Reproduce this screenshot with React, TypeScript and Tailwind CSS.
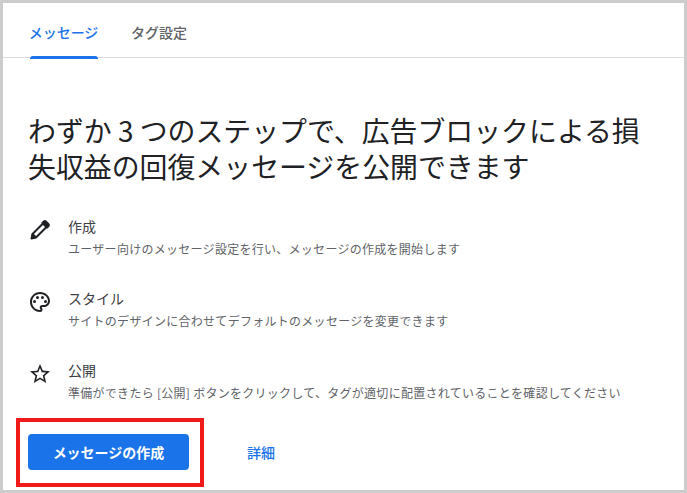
import React from "react";

const font = { fontFamily: '"Noto Sans CJK JP", "Noto Sans", sans-serif' };

function Pencil() {
  return (
    <svg viewBox="0 0 24 24" className="w-[24px] h-[24px]" fill="none" stroke="#202124" strokeWidth="2" strokeLinejoin="round">
      <path d="M4 20l1-4.5L15.5 5l3.5 3.5L8.5 19z" />
      <path d="M3.5 20.5l4.5-1-3.5-3.5z" fill="#202124" />
      <path d="M15.8 3.6a1.6 1.6 0 0 1 2.2 0l2.4 2.4a1.6 1.6 0 0 1 0 2.2L19 9.6 14.4 5z" fill="#202124" />
    </svg>
  );
}
function Palette() {
  return (
    <svg viewBox="0 0 24 24" className="w-[24px] h-[24px]" fill="#202124">
      <path d="M12 22C6.49 22 2 17.51 2 12S6.49 2 12 2s10 4.04 10 9c0 3.31-2.69 6-6 6h-1.77c-.28 0-.5.22-.5.5 0 .12.05.23.13.33.41.47.64 1.06.64 1.67A2.5 2.5 0 0 1 12 22zm0-18c-4.41 0-8 3.59-8 8s3.59 8 8 8c.28 0 .5-.22.5-.5a.54.54 0 0 0-.14-.35c-.41-.46-.63-1.05-.63-1.65a2.5 2.5 0 0 1 2.5-2.5H16c2.21 0 4-1.79 4-4 0-3.86-3.59-7-8-7z" />
      <circle cx="6.5" cy="11.5" r="1.5" />
      <circle cx="9.5" cy="7.5" r="1.5" />
      <circle cx="14.5" cy="7.5" r="1.5" />
      <circle cx="17.5" cy="11.5" r="1.5" />
    </svg>
  );
}
function Star() {
  return (
    <svg viewBox="0 0 24 24" className="w-[24px] h-[24px]" fill="#202124">
      <path d="M22 9.24l-7.19-.62L12 2 9.19 8.63 2 9.24l5.46 4.73L5.82 21 12 17.27 18.18 21l-1.63-7.03L22 9.24zM12 15.4l-3.76 2.27 1-4.28-3.32-2.88 4.38-.38L12 6.1l1.71 4.04 4.38.38-3.32 2.88 1 4.28L12 15.4z" />
    </svg>
  );
}

function Step({ icon, title, desc }: { icon: React.ReactNode; title: string; desc: string }) {
  return (
    <div className="flex h-[72px] items-start">
      <div className="w-[40px] shrink-0 pt-[2px]">{icon}</div>
      <div>
        <div className="text-[14px] leading-[20px] text-[#3c4043]">{title}</div>
        <div className="text-[12px] leading-[16px] mt-[5px] tracking-[0.28px] text-[#5f6368] whitespace-nowrap">{desc}</div>
      </div>
    </div>
  );
}

export default function App() {
  return (
    <div className="relative w-[687px] h-[493px] overflow-hidden bg-[#cccccc] p-[3px]" style={font}>
      <div className="w-full h-full bg-white flex flex-col">
        <div className="flex h-[55px] border-b border-[#dadce0] pl-[26px] gap-[33px] shrink-0">
          <div className="relative h-[55px] flex items-center justify-center w-[69px] pt-[4px] text-[14px] font-medium text-[#1a73e8] whitespace-nowrap">
            メッセージ
            <div className="absolute left-[1px] right-0 bottom-[-1px] h-[3px] rounded-t-[3px] bg-[#1a73e8]" />
          </div>
          <div className="h-[55px] flex items-center pt-[4px] text-[14px] font-medium text-[#5f6368] whitespace-nowrap">タグ設定</div>
        </div>
        <div className="pl-[25px] pr-[26px] pt-[54px] flex flex-col">
          <h1 className="text-[27.9px] leading-[36px] text-[#202124] font-normal">
            わずか 3 つのステップで、広告ブロックによる損失収益の回復メッセージを公開できます
          </h1>
          <div className="mt-[32px] flex flex-col">
            <Step icon={<Pencil />} title="作成" desc="ユーザー向けのメッセージ設定を行い、メッセージの作成を開始します" />
            <Step icon={<Palette />} title="スタイル" desc="サイトのデザインに合わせてデフォルトのメッセージを変更できます" />
            <Step icon={<Star />} title="公開" desc="準備ができたら [公開] ボタンをクリックして、タグが適切に配置されていることを確認してください" />
          </div>
          <div className="flex items-center mt-[2px]">
            <button className="w-[161px] h-[36px] rounded-[4px] bg-[#1a73e8] text-white text-[14px] font-bold">メッセージの作成</button>
            <a className="ml-[58px] text-[14px] font-medium text-[#1a73e8]">詳細</a>
          </div>
        </div>
      </div>
      <div className="absolute left-[16px] top-[418px] w-[188px] h-[69px] border-[4px] border-[#f01a1a]" />
    </div>
  );
}
